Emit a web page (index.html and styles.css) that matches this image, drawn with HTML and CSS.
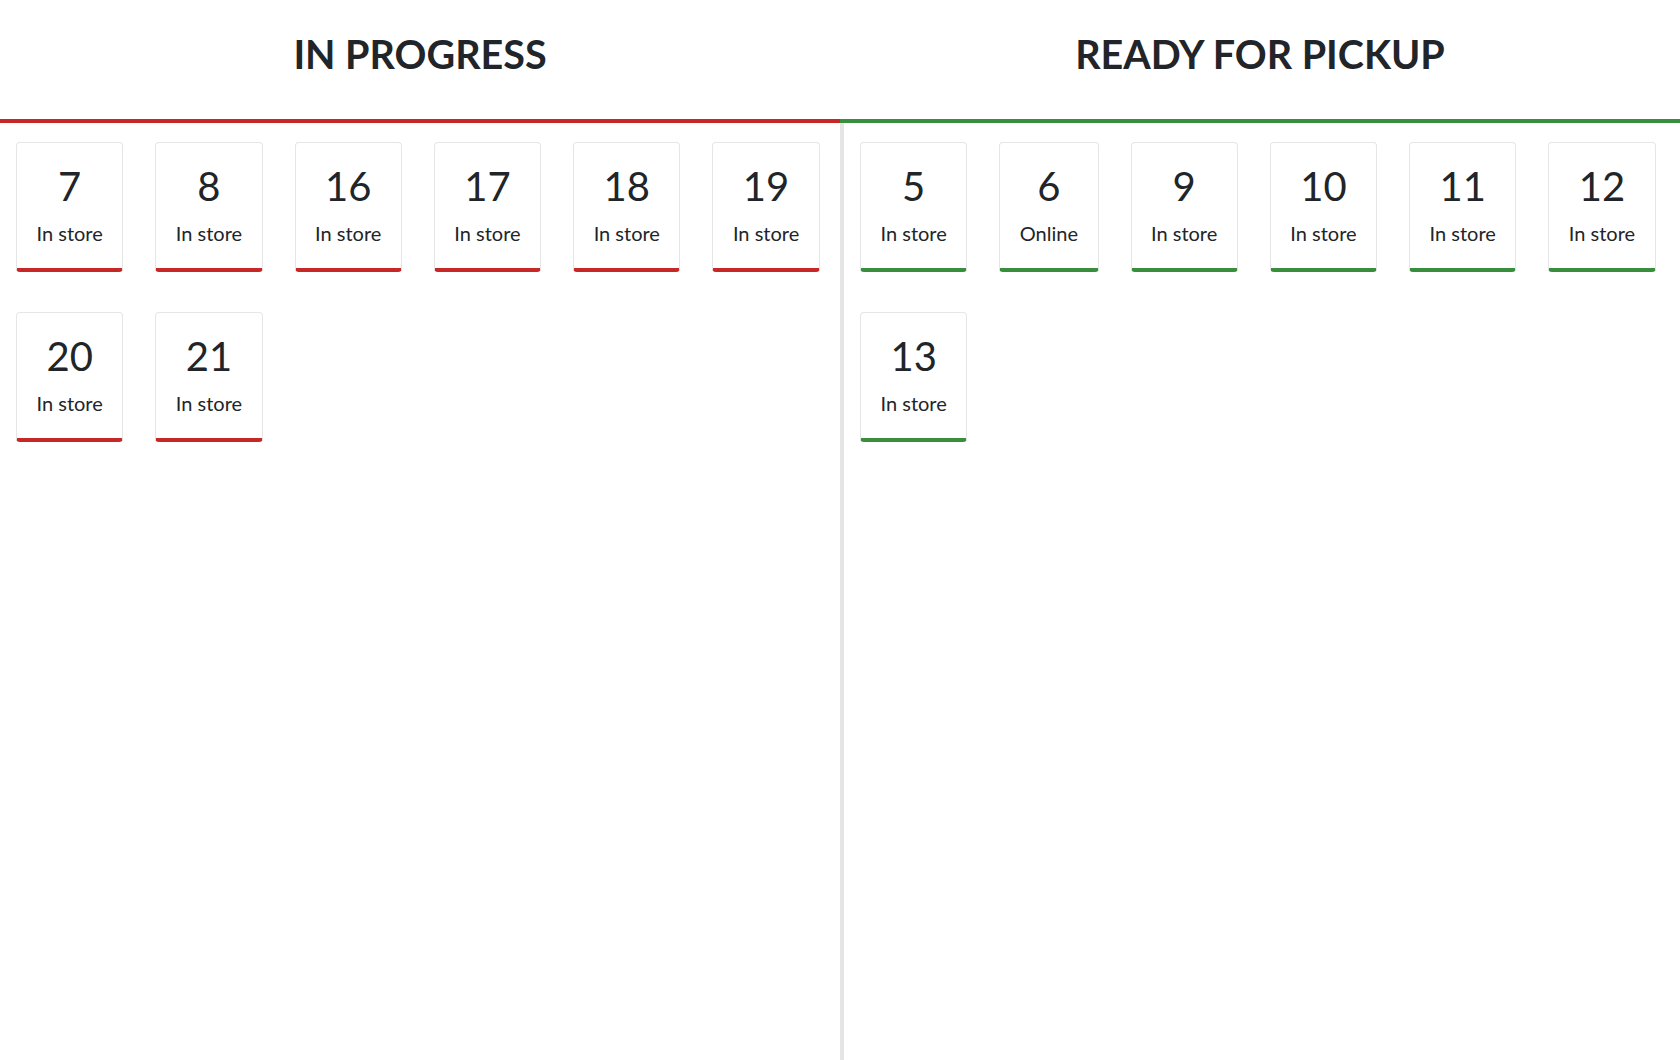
FILE: index.html
```html
<!DOCTYPE html>
<html lang="en">
<head>
<meta charset="utf-8">
<title>Order status board</title>
<link rel="stylesheet" href="styles.css">
</head>
<body>
<main class="board">
  <section class="column column--progress">
    <header class="column-header"><h1 class="column-title">IN PROGRESS</h1></header>
    <div class="column-body">
      <div class="order"><div class="order-number">7</div><div class="order-type">In store</div></div>
      <div class="order"><div class="order-number">8</div><div class="order-type">In store</div></div>
      <div class="order"><div class="order-number">16</div><div class="order-type">In store</div></div>
      <div class="order"><div class="order-number">17</div><div class="order-type">In store</div></div>
      <div class="order"><div class="order-number">18</div><div class="order-type">In store</div></div>
      <div class="order"><div class="order-number">19</div><div class="order-type">In store</div></div>
      <div class="order"><div class="order-number">20</div><div class="order-type">In store</div></div>
      <div class="order"><div class="order-number">21</div><div class="order-type">In store</div></div>
    </div>
  </section>
  <section class="column column--ready">
    <header class="column-header"><h1 class="column-title">READY FOR PICKUP</h1></header>
    <div class="column-body">
      <div class="order"><div class="order-number">5</div><div class="order-type">In store</div></div>
      <div class="order"><div class="order-number">6</div><div class="order-type">Online</div></div>
      <div class="order"><div class="order-number">9</div><div class="order-type">In store</div></div>
      <div class="order"><div class="order-number">10</div><div class="order-type">In store</div></div>
      <div class="order"><div class="order-number">11</div><div class="order-type">In store</div></div>
      <div class="order"><div class="order-number">12</div><div class="order-type">In store</div></div>
      <div class="order"><div class="order-number">13</div><div class="order-type">In store</div></div>
    </div>
  </section>
</main>
</body>
</html>
```

FILE: styles.css
```css
* { box-sizing: border-box; }

html, body {
  margin: 0;
  padding: 0;
  height: 100%;
  background: #ffffff;
  overflow: hidden;
}

body {
  font-family: Lato, "Liberation Sans", sans-serif;
  color: #212529;
}

.board {
  display: grid;
  grid-template-columns: 840px 840px;
  height: 1060px;
}

.column {
  display: flex;
  flex-direction: column;
  min-height: 0;
}

.column-header {
  height: 123px;
  padding-top: 30px;
  border-bottom: 4px solid #c62828;
  text-align: center;
}

.column--ready .column-header {
  border-bottom-color: #388e3c;
}

.column-title {
  margin: 0;
  font-size: 39.5px;
  line-height: 47px;
  font-weight: 700;
  color: #212529;
}

.column-body {
  flex: 1;
  display: flex;
  flex-wrap: wrap;
  align-content: flex-start;
  column-gap: 32px;
  row-gap: 40px;
  padding: 19px 16px;
}

.column--ready .column-body {
  border-left: 4px solid #e5e5e5;
}

.order {
  border: 1px solid #e6e6e6;
  border-bottom: 4px solid #c62828;
  border-radius: 4px;
  background: #ffffff;
  padding: 19px 19.5px 23px;
  text-align: center;
}

.column--ready .order {
  border-bottom-color: #388e3c;
}

.order-number {
  font-size: 40px;
  line-height: 48px;
  font-weight: 400;
}

.order-type {
  margin-top: 11px;
  font-size: 20px;
  line-height: 24px;
  font-weight: 400;
  white-space: nowrap;
}
```
